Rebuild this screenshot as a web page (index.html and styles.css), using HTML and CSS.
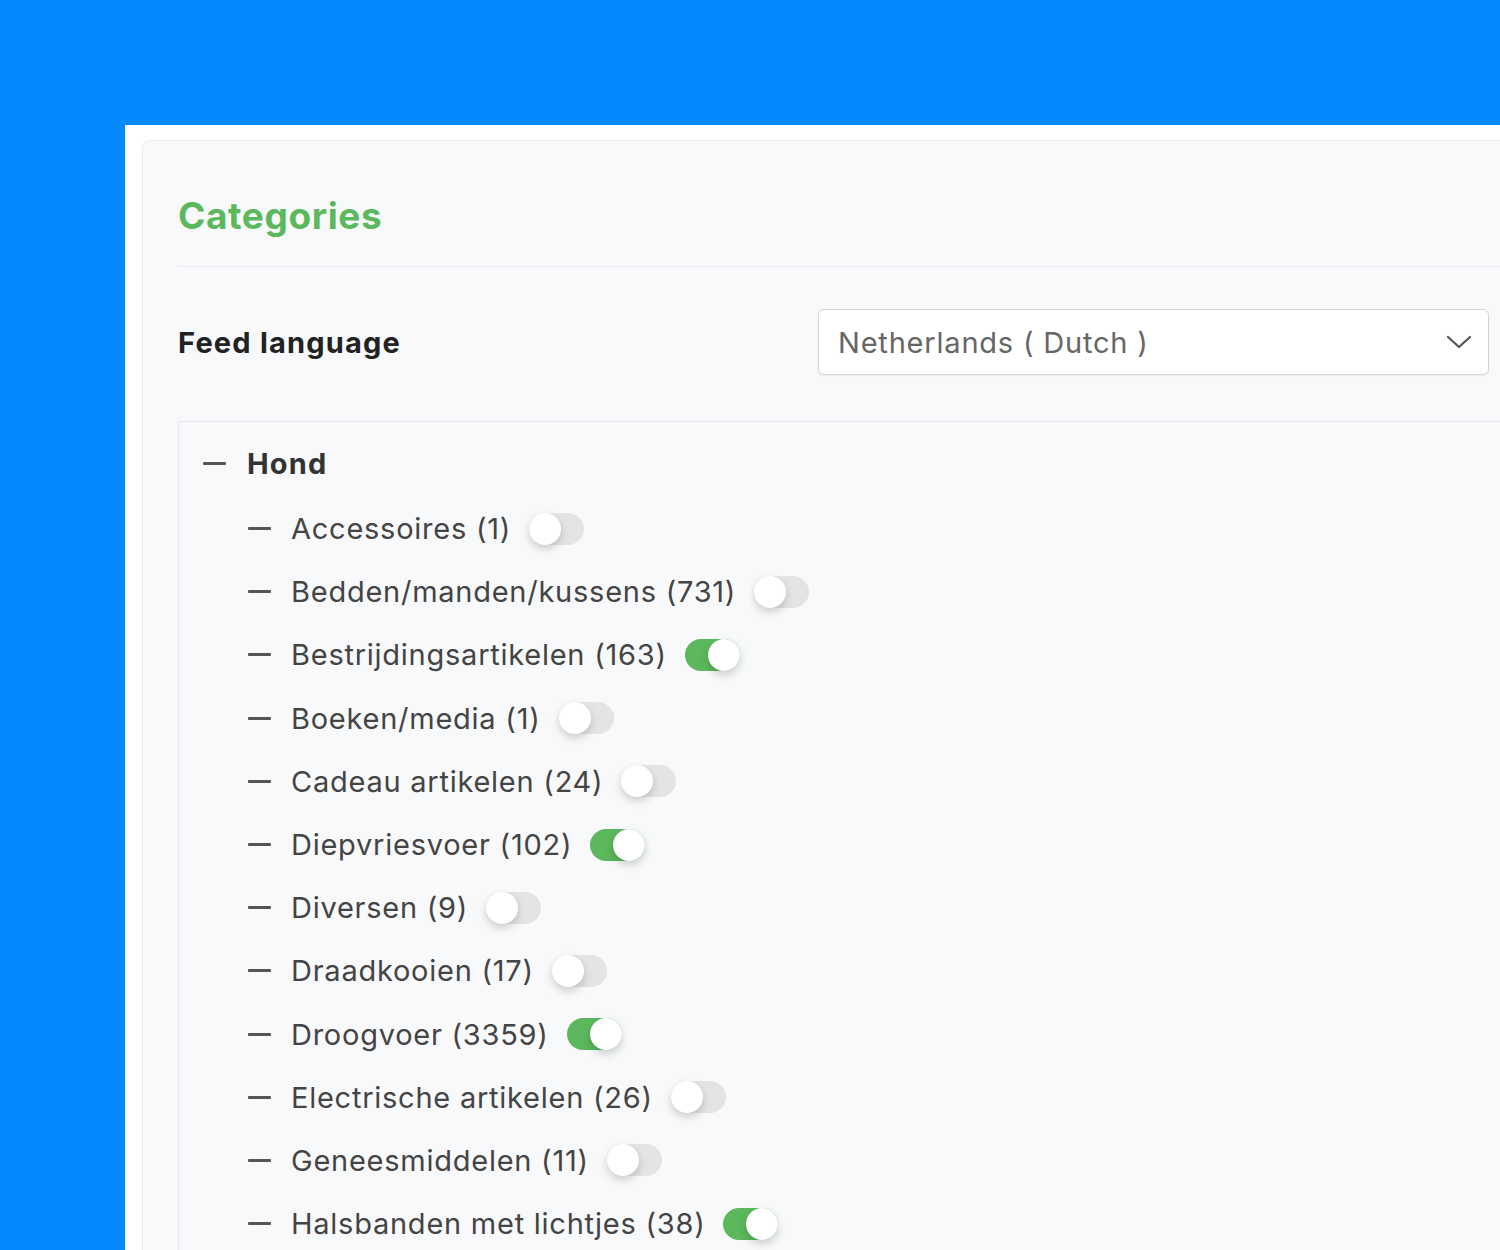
FILE: index.html
```html
<!DOCTYPE html>
<html>
<head>
<meta charset="utf-8">
<link rel="stylesheet" href="styles.css">
</head>
<body>
<div class="panel">
  <div class="card">
    <div class="card-head">
      <h2 class="title">Categories</h2>
    </div>
    <div class="feed-row">
      <label class="feed-label">Feed language</label>
      <div class="select">
        <span class="select-text">Netherlands ( Dutch )</span>
        <svg class="chev" width="26" height="16" viewBox="0 0 26 16"><path d="M2 3 L13 13 L24 3" fill="none" stroke="#555" stroke-width="2.2" stroke-linecap="round" stroke-linejoin="round"/></svg>
      </div>
    </div>
    <div class="tree">
      <div class="row root"><span class="dash"></span><span class="root-name">Hond</span></div>
      <div class="children">
        <div class="row item"><span class="dash"></span><span class="name">Accessoires (1)</span><span class="toggle"></span></div>
        <div class="row item"><span class="dash"></span><span class="name">Bedden/manden/kussens (731)</span><span class="toggle"></span></div>
        <div class="row item"><span class="dash"></span><span class="name">Bestrijdingsartikelen (163)</span><span class="toggle on"></span></div>
        <div class="row item"><span class="dash"></span><span class="name">Boeken/media (1)</span><span class="toggle"></span></div>
        <div class="row item"><span class="dash"></span><span class="name">Cadeau artikelen (24)</span><span class="toggle"></span></div>
        <div class="row item"><span class="dash"></span><span class="name">Diepvriesvoer (102)</span><span class="toggle on"></span></div>
        <div class="row item"><span class="dash"></span><span class="name">Diversen (9)</span><span class="toggle"></span></div>
        <div class="row item"><span class="dash"></span><span class="name">Draadkooien (17)</span><span class="toggle"></span></div>
        <div class="row item"><span class="dash"></span><span class="name">Droogvoer (3359)</span><span class="toggle on"></span></div>
        <div class="row item"><span class="dash"></span><span class="name">Electrische artikelen (26)</span><span class="toggle"></span></div>
        <div class="row item"><span class="dash"></span><span class="name">Geneesmiddelen (11)</span><span class="toggle"></span></div>
        <div class="row item"><span class="dash"></span><span class="name">Halsbanden met lichtjes (38)</span><span class="toggle on"></span></div>
      </div>
    </div>
  </div>
</div>
</body>
</html>
```
FILE: styles.css
```css
html, body {
  margin: 0;
  padding: 0;
}
body {
  background: #0589ff;
  width: 1500px;
  height: 1250px;
  overflow: hidden;
  font-family: Inter, "Liberation Sans", Arial, sans-serif;
}
.panel {
  margin: 125px 0 0 125px;
  background: #ffffff;
  height: 1125px;
  padding: 15px 0 0 17px;
  box-sizing: border-box;
  overflow: hidden;
}
.card {
  width: 1500px;
  height: 1300px;
  background: #f8f9fb;
  border: 1px solid #e9ebee;
  border-radius: 8px 0 0 0;
  padding-left: 35px;
  box-sizing: border-box;
}
.card-head {
  width: 1400px;
  border-bottom: 1px solid #e8eaed;
  padding: 52px 0 27px 0;
}
.title {
  margin: 0;
  font-size: 37px;
  line-height: 46px;
  font-weight: 700;
  color: #5cb85c;
  letter-spacing: 0.6px;
}
.feed-row {
  display: grid;
  grid-template-columns: 640px 671px;
  align-items: center;
  margin-top: 42px;
}
.feed-label {
  font-size: 29px;
  font-weight: 700;
  color: #222;
  letter-spacing: 1.2px;
}
.select {
  height: 66px;
  box-sizing: border-box;
  background: #fff;
  border: 1px solid #d3d5d8;
  border-radius: 6px;
  display: flex;
  align-items: center;
  justify-content: space-between;
  padding: 0 16px 0 19px;
  box-shadow: 0 1px 2px rgba(0,0,0,0.06);
}
.select-text {
  font-size: 29px;
  color: #666;
  letter-spacing: 0.8px;
}
.chev {
  display: block;
}
.tree {
  margin-top: 46px;
  border-top: 1px solid #e6e8eb;
  border-left: 1px solid #e6e8eb;
  padding: 10px 0 0 24px;
}
.row {
  display: flex;
  align-items: center;
  height: 63px;
}
.dash {
  width: 23px;
  height: 3px;
  background: #555;
  border-radius: 1px;
  flex: none;
}
.root .dash {
  margin-right: 21px;
}
.root-name {
  font-size: 29px;
  font-weight: 700;
  color: #333;
  letter-spacing: 1.2px;
}
.children {
  padding-left: 45px;
  padding-top: 2px;
}
.item {
  height: 63.2px;
}
.item .dash {
  margin-right: 20px;
}
.name {
  font-size: 29px;
  color: #444;
  letter-spacing: 0.75px;
}
.toggle {
  position: relative;
  width: 55px;
  height: 32px;
  border-radius: 16px;
  background: #e3e4e6;
  margin-left: 18px;
  flex: none;
}
.toggle::after {
  content: "";
  position: absolute;
  left: 0;
  top: 0;
  width: 32px;
  height: 32px;
  border-radius: 50%;
  background: #fff;
  box-shadow: 0 4px 8px rgba(0,0,0,0.18);
}
.toggle.on {
  background: #5cb85c;
}
.toggle.on::after {
  left: 23px;
}
```
